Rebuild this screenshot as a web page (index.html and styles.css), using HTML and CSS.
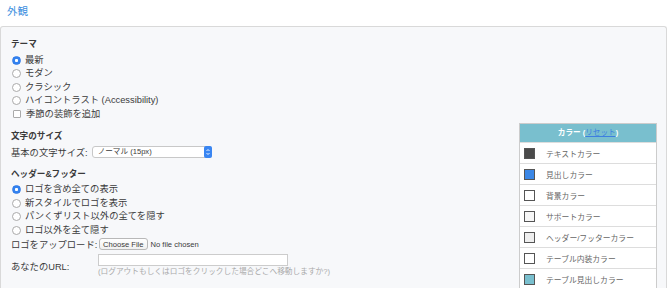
FILE: index.html
```html
<!DOCTYPE html>
<html lang="ja">
<head>
    <meta charset="UTF-8">
    <meta name="viewport" content="width=device-width, initial-scale=1.0">
    <title>外観</title>
    <link rel="stylesheet" href="styles.css">
</head>
<body>
    <div class="page-title">外観</div>

    <div class="panel">
        <div class="settings">
            <div class="section">
                <div class="heading">テーマ</div>
                <label class="option"><span class="radio checked"></span>最新</label>
                <label class="option"><span class="radio"></span>モダン</label>
                <label class="option"><span class="radio"></span>クラシック</label>
                <label class="option"><span class="radio"></span>ハイコントラスト (Accessibility)</label>
                <label class="option"><span class="check"></span>季節の装飾を追加</label>
            </div>

            <div class="section">
                <div class="heading">文字のサイズ</div>
                <div class="field-row">
                    <span>基本の文字サイズ:</span>
                    <span class="select">ノーマル (15px)<span class="select-arrow">
                        <svg width="8" height="10" viewBox="0 0 8 10"><path d="M2.5 4 L4 2.5 L5.5 4 M2.5 6 L4 7.5 L5.5 6" fill="none" stroke="#fff" stroke-width="0.9"/></svg>
                    </span></span>
                </div>
            </div>

            <div class="section">
                <div class="heading">ヘッダー&amp;フッター</div>
                <label class="option"><span class="radio checked"></span>ロゴを含め全ての表示</label>
                <label class="option"><span class="radio"></span>新スタイルでロゴを表示</label>
                <label class="option"><span class="radio"></span>パンくずリスト以外の全てを隠す</label>
                <label class="option"><span class="radio"></span>ロゴ以外を全て隠す</label>
                <div class="field-row">
                    <span class="field-label">ロゴをアップロード:</span>
                    <span class="file-btn">Choose File</span>
                    <span class="file-name">No file chosen</span>
                </div>
                <div class="field-row url-row">
                    <span class="field-label">あなたのURL:</span>
                    <div>
                        <div class="text-input"></div>
                        <div class="hint">(ログアウトもしくはロゴをクリックした場合どこへ移動しますか?)</div>
                    </div>
                </div>
            </div>
        </div>

        <div class="colors">
            <div class="colors-head">カラー (<a href="#">リセット</a>)</div>
            <div class="color-row"><span class="swatch sw-text"></span>テキストカラー</div>
            <div class="color-row"><span class="swatch sw-title"></span>見出しカラー</div>
            <div class="color-row"><span class="swatch sw-bg"></span>背景カラー</div>
            <div class="color-row"><span class="swatch sw-support"></span>サポートカラー</div>
            <div class="color-row"><span class="swatch sw-header"></span>ヘッダー/フッターカラー</div>
            <div class="color-row"><span class="swatch sw-table"></span>テーブル内装カラー</div>
            <div class="color-row"><span class="swatch sw-thead"></span>テーブル見出しカラー</div>
        </div>
    </div>
</body>
</html>
```

FILE: styles.css
```css
body {
	margin: 0;
	font-family: "Liberation Sans", "Noto Sans CJK JP", sans-serif;
	font-size: 9.3px;
	color: #3a3a3a;
	background: #fff;
	height: 288px;
	overflow: hidden;
}

.page-title {
	color: #3d8fe0;
	font-size: 10.5px;
	padding: 3px 7px 0;
	height: 23px;
	box-sizing: border-box;
	height: 26px;
}

.panel {
	display: flex;
	justify-content: space-between;
	border: solid #d9d9d9 1px;
	border-bottom: none;
	border-radius: 3px 3px 0 0;
	background-color: #f7f8fa;
	padding: 10px 9px 0 10px;
	box-sizing: border-box;
	width: 667px;
	height: 262px;
	overflow: hidden;
}

.section {
	margin-bottom: 7.5px;
}

.heading {
	font-weight: bold;
	font-size: 8.6px;
	line-height: 14px;
	margin-bottom: 2.5px;
}

.option {
	display: flex;
	align-items: center;
	line-height: 13.5px;
	height: 13.5px;
}

.radio {
	width: 7px;
	height: 7px;
	border: solid #aaa 0.8px;
	border-radius: 50%;
	background: #fff;
	margin: 0 4px 0 1px;
	box-sizing: content-box;
}

.radio.checked {
	border-color: #2f7be8;
	background: radial-gradient(circle, #fff 0 1.3px, #3483f0 1.8px);
}

.check {
	width: 6px;
	height: 6px;
	border: solid #aaa 0.8px;
	border-radius: 1px;
	background: #fff;
	margin: 0 5px 0 2px;
}

.field-row {
	display: flex;
	align-items: center;
	height: 14px;
}

.field-label {
	width: 87px;
}

.select {
	position: relative;
	margin-left: 4px;
	width: 120px;
	height: 12px;
	box-sizing: border-box;
	border: solid #c8c8c8 1px;
	border-radius: 3px;
	background: #fff;
	font-size: 7.6px;
	line-height: 10px;
	padding-left: 5px;
}

.select-arrow {
	position: absolute;
	right: -1px;
	top: -1px;
	width: 8px;
	height: 12px;
	border-radius: 2px;
	background: #3a86f2;
	display: flex;
	align-items: center;
}

.file-btn {
	font-size: 7.6px;
	border: solid #b8b8b8 1px;
	border-radius: 3px;
	background: linear-gradient(#fff, #f0f0f0);
	padding: 0 3px;
	height: 12px;
	line-height: 11px;
	box-sizing: border-box;
	margin-left: 1px;
}

.file-name {
	font-size: 7.6px;
	margin-left: 3px;
}

.url-row {
	height: auto;
	margin-top: 2.5px;
}

.text-input {
	width: 190px;
	height: 12px;
	box-sizing: border-box;
	border: solid #ccc 1px;
	background: #fff;
}

.hint {
	color: #aaa;
	font-size: 7.7px;
	line-height: 12px;
}

.colors {
	margin-top: 86px;
	width: 138px;
	box-sizing: border-box;
	border: solid #ccc 1px;
	border-bottom: none;
	align-self: flex-start;
	background: #fff;
}

.colors-head {
	background-color: #79bfce;
	color: #fff;
	font-weight: bold;
	font-size: 7.6px;
	text-align: center;
	height: 18px;
	line-height: 18px;
}

.colors-head a {
	color: #3d7fe0;
	font-weight: normal;
}

.color-row {
	display: flex;
	align-items: center;
	height: 20px;
	border-top: solid #ddd 1px;
	font-size: 7.8px;
	color: #666;
}

.swatch {
	width: 9px;
	height: 9px;
	border: solid #555 1px;
	margin: 0 11px 0 4px;
}

.sw-text { background: #4a4a4a; }
.sw-title { background: #3b87e6; }
.sw-bg { background: #fff; }
.sw-support { background: #f6f6f6; }
.sw-header { background: #eeeeee; }
.sw-table { background: #fff; }
.sw-thead { background: #79bfce; }
```
